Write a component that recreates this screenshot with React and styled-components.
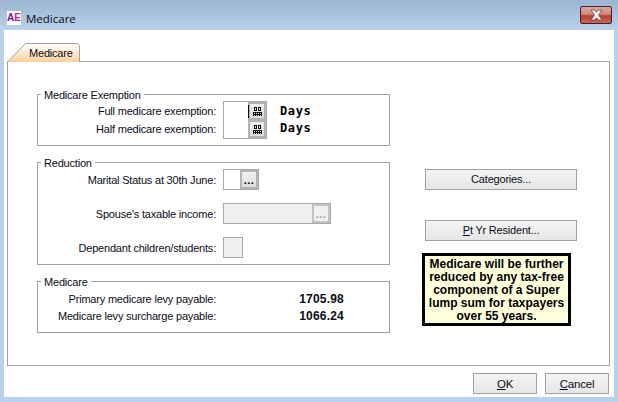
import React from 'react'
import styled, { createGlobalStyle } from 'styled-components'

const GlobalStyle = createGlobalStyle`
    html, body {
        margin: 0;
        padding: 0;
        background: #b9d1ea;
    }
    body {
        font-family: "Liberation Sans", Arial, sans-serif;
        font-size: 11px;
        letter-spacing: -0.2px;
        color: #0c0c18;
    }
`

const CalendarIcon = function () {
    return (
        <svg width="9" height="9" viewBox="0 0 9 9" shapeRendering="crispEdges">
            <path d="M1.5 .5h2v3h-2zM5.5 .5h2v3h-2z" fill="none" stroke="#111" strokeWidth="1" />
            <path d="M0 5h9v4H0z" fill="#111" />
            <path d="M1 6h1v1H1zM3 6h1v1H3zM5 6h1v1H5zM7 6h1v1H7zM1 8h1v1H1zM3 8h1v1H3zM5 8h1v1H5zM7 8h1v1H7z" fill="#d8d8d8" />
        </svg>
    )
}

const CloseIcon = function () {
    return (
        <svg width="17" height="12" viewBox="0 0 17 12">
            <path d="M3 1h3.6l1.9 2.2L10.4 1H14l-3.4 5 3.4 5h-3.6L8.5 8.8 6.6 11H3l3.4-5z" fill="#f2f2f2" stroke="#6a4444" strokeWidth=".8" />
        </svg>
    )
}

const TabShape = function () {
    return (
        <TabSvg width="74" height="19" viewBox="0 0 74 19">
            <defs>
                <linearGradient id="tabFill" x1="0" y1="0" x2="0" y2="1">
                    <stop offset="0" stopColor="#ffffff" />
                    <stop offset="0.3" stopColor="#fff3e4" />
                    <stop offset="1" stopColor="#ffcf96" />
                </linearGradient>
            </defs>
            <path d="M.5 19 L18.5 .5 H70.5 L72.5 2.5 V19 Z" fill="url(#tabFill)" />
            <path d="M.5 19 L18.5 .5 H70.5 L72.5 2.5 V19" fill="none" stroke="#a0a0a0" />
        </TabSvg>
    )
}

export default function App() {
    return (
        <>
            <GlobalStyle />
            <Win>
                <TitleBar>
                    <AppIcon><IconA>A</IconA><IconE>E</IconE></AppIcon>
                    <Title>Medicare</Title>
                    <CloseButton><CloseIcon /></CloseButton>
                </TitleBar>
                <Client>
                    <TabStrip>
                        <Tab>
                            <TabShape />
                            <TabLabel>Medicare</TabLabel>
                        </Tab>
                    </TabStrip>
                    <Panel>
                        <LeftColumn>
                            <Group $height={52}>
                                <Legend>Medicare Exemption</Legend>
                                <ExemptionGrid>
                                    <Label>Full medicare exemption:</Label>
                                    <PairField>
                                        <Caret />
                                        <CalendarButton><CalendarIcon /></CalendarButton>
                                        <CalendarButton><CalendarIcon /></CalendarButton>
                                    </PairField>
                                    <Days>Days</Days>
                                    <Label>Half medicare exemption:</Label>
                                    <Days $lift>Days</Days>
                                </ExemptionGrid>
                            </Group>
                            <Group $height={103}>
                                <Legend>Reduction</Legend>
                                <ReductionRows>
                                    <Row>
                                        <Label>Marital Status at 30th June:</Label>
                                        <Field $width={36}>
                                            <DotsButton>...</DotsButton>
                                        </Field>
                                    </Row>
                                    <Row>
                                        <Label>Spouse's taxable income:</Label>
                                        <Field $width={108} $disabled>
                                            <DotsButton $disabled>...</DotsButton>
                                        </Field>
                                    </Row>
                                    <Row>
                                        <Label>Dependant children/students:</Label>
                                        <Field $width={20} $disabled />
                                    </Row>
                                </ReductionRows>
                            </Group>
                            <Group $height={52}>
                                <Legend>Medicare</Legend>
                                <LevyRows>
                                    <LevyRow>
                                        <Label>Primary medicare levy payable:</Label>
                                        <Amount>1705.98</Amount>
                                    </LevyRow>
                                    <LevyRow>
                                        <Label>Medicare levy surcharge payable:</Label>
                                        <Amount>1066.24</Amount>
                                    </LevyRow>
                                </LevyRows>
                            </Group>
                        </LeftColumn>
                        <RightColumn>
                            <WideButton $top={75}>Cate<u>g</u>ories...</WideButton>
                            <WideButton $top={30}><u>P</u>t Yr Resident...</WideButton>
                            <Note>
                                Medicare will be further<br />
                                reduced by any tax-free<br />
                                component of a Super<br />
                                lump sum for taxpayers<br />
                                over 55 years.
                            </Note>
                        </RightColumn>
                    </Panel>
                    <Footer>
                        <DialogButton><u>O</u>K</DialogButton>
                        <DialogButton><u>C</u>ancel</DialogButton>
                    </Footer>
                </Client>
            </Win>
        </>
    )
}

const Win = styled.div`
    width: 618px;
    height: 402px;
    display: flex;
    flex-direction: column;
    overflow: hidden;
    background: linear-gradient(to bottom, #9ab6d2 0, #b9d1ea 30px);
`

const TitleBar = styled.div`
    height: 30px;
    flex: none;
    display: flex;
    align-items: center;
    padding: 6px 6px 0 7px;
    box-sizing: border-box;
`

const AppIcon = styled.div`
    width: 14px;
    height: 14px;
    background: #fff;
    font-family: "Liberation Sans", sans-serif;
    font-size: 10px;
    font-weight: bold;
    line-height: 14px;
    text-align: center;
    letter-spacing: 0;
`

const IconA = styled.span`
    color: #6d14a8;
`

const IconE = styled.span`
    color: #c0208f;
`

const Title = styled.div`
    margin-left: 5px;
    font-family: "Open Sans", sans-serif;
    font-size: 11.5px;
    letter-spacing: 0;
    color: #0a0a14;
`

const CloseButton = styled.div`
    margin-left: auto;
    margin-top: -6px;
    width: 32px;
    height: 18px;
    box-sizing: border-box;
    display: flex;
    align-items: center;
    justify-content: center;
    border: 1px solid #4a2028;
    border-radius: 2px;
    background: linear-gradient(to bottom, #dca79c 0, #cf8a7e 45%, #b8402f 55%, #c9665a 100%);
`

const Client = styled.div`
    flex: 1;
    margin: 0 4px 5px;
    padding-top: 13px;
    background: #fff;
    display: flex;
    flex-direction: column;
`

const TabStrip = styled.div`
    display: flex;
    padding-left: 3px;
    margin-bottom: -1px;
`

const Tab = styled.div`
    position: relative;
    z-index: 1;
    width: 73px;
    height: 19px;
`

const TabSvg = styled.svg`
    display: block;
`

const TabLabel = styled.div`
    position: absolute;
    top: 3px;
    left: 22px;
    font-size: 11px;
    line-height: 14px;
`

const Panel = styled.div`
    height: 305px;
    margin: 0 4px 0 3px;
    padding: 32px 0 0 29px;
    box-sizing: border-box;
    border: 1px solid #a0a0a0;
    display: flex;
`

const LeftColumn = styled.div`
    width: 353px;
    display: flex;
    flex-direction: column;
    gap: 16px;
`

const Group = styled.div`
    position: relative;
    height: ${props => props.$height}px;
    box-sizing: border-box;
    border: 1px solid #a0a0a0;
`

const Legend = styled.div`
    position: absolute;
    top: -7px;
    left: 3px;
    padding: 0 3px;
    background: #fff;
    line-height: 14px;
`

const Label = styled.div`
    width: 178px;
    text-align: right;
    white-space: nowrap;
`

const ExemptionGrid = styled.div`
    display: grid;
    grid-template-columns: 178px 44px auto;
    grid-template-rows: 18px 18px;
    column-gap: 7px;
    align-items: center;
    padding-top: 7px;
`

const PairField = styled.div`
    grid-row: 1 / span 2;
    grid-column: 2;
    align-self: start;
    position: relative;
    width: 44px;
    height: 38px;
    margin-top: -1px;
    box-sizing: border-box;
    border: 1px solid #a8a8a8;
    display: flex;
    flex-direction: column;
    align-items: flex-end;
`

const Caret = styled.div`
    position: absolute;
    left: 24px;
    top: 3px;
    width: 1px;
    height: 13px;
    background: #000;
`

const CalendarButton = styled.div`
    width: 18px;
    height: 18px;
    box-sizing: border-box;
    border: 2px solid #b4b4b4;
    background: linear-gradient(to bottom, #ececec, #dcdcdc);
    display: flex;
    align-items: center;
    justify-content: center;
`

const Days = styled.div`
    grid-column: 3;
    margin: 0 0 ${props => props.$lift ? '2px' : '0'} 6px;
    font-family: "DejaVu Sans Mono", monospace;
    font-size: 12px;
    font-weight: bold;
    letter-spacing: 0.6px;
    color: #000;
`

const ReductionRows = styled.div`
    display: flex;
    flex-direction: column;
    padding-top: 6px;
`

const Row = styled.div`
    display: flex;
    align-items: center;
    gap: 7px;
    height: 21px;
    margin-bottom: 13px;
`

const Field = styled.div`
    width: ${props => props.$width}px;
    height: 21px;
    box-sizing: border-box;
    border: 1px solid #a8a8a8;
    background: ${props => props.$disabled ? '#f0f0f0' : '#fff'};
    display: flex;
    justify-content: flex-end;
`

const DotsButton = styled.div`
    width: 18px;
    height: 19px;
    box-sizing: border-box;
    border: 2px solid ${props => props.$disabled ? '#c4c4c4' : '#b4b4b4'};
    background: ${props => props.$disabled ? '#f0f0f0' : 'linear-gradient(to bottom, #f0f0f0, #dedede)'};
    color: ${props => props.$disabled ? '#9a9a9a' : '#000'};
    font-size: 11px;
    font-weight: bold;
    letter-spacing: 0.5px;
    line-height: 16px;
    text-align: center;
`

const LevyRows = styled.div`
    padding-top: 10px;
    display: flex;
    flex-direction: column;
    gap: 3px;
`

const LevyRow = styled.div`
    display: flex;
    height: 14px;
    line-height: 14px;
`

const Amount = styled.div`
    width: 128px;
    text-align: right;
    font-size: 12px;
    font-weight: bold;
    letter-spacing: 0.2px;
`

const RightColumn = styled.div`
    width: 155px;
    margin-left: 32px;
    display: flex;
    flex-direction: column;
    align-items: flex-start;
`

const WideButton = styled.div`
    width: 152px;
    height: 21px;
    margin: ${props => props.$top}px 0 0 3px;
    flex: none;
    box-sizing: border-box;
    border: 1px solid #a0a0a0;
    background: linear-gradient(to bottom, #f4f4f4, #e6e6e6);
    line-height: 18px;
    text-align: center;
`

const Note = styled.div`
    width: 149px;
    height: 73px;
    margin-top: 12px;
    padding-top: 2px;
    box-sizing: border-box;
    border: 3px solid #000;
    background: #ffffdc;
    color: #000;
    font-size: 12px;
    font-weight: bold;
    letter-spacing: 0;
    line-height: 13px;
    text-align: center;
    white-space: nowrap;
`

const Footer = styled.div`
    display: flex;
    justify-content: flex-end;
    gap: 8px;
    padding: 7px 5px 0 0;
`

const DialogButton = styled.div`
    width: 64px;
    height: 21px;
    box-sizing: border-box;
    border: 1px solid #a0a0a0;
    background: linear-gradient(to bottom, #f4f4f4, #e6e6e6);
    font-size: 11.5px;
    line-height: 20px;
    text-align: center;
`
